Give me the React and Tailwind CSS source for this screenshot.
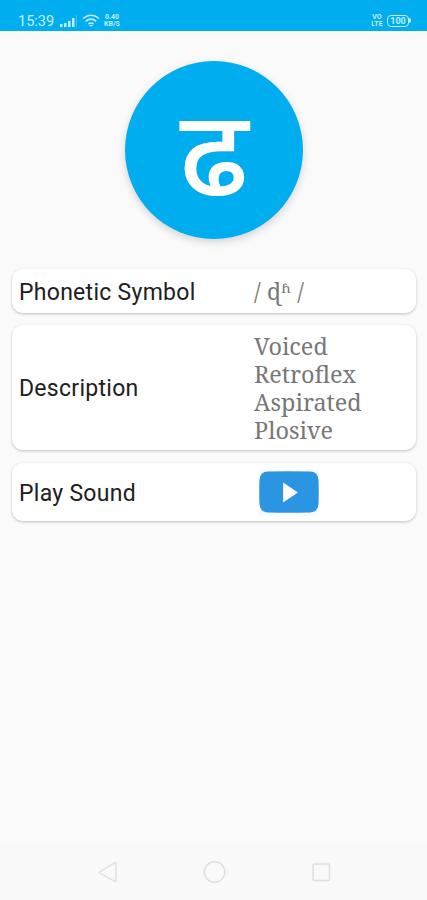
import React from "react";

const cardClass =
  "flex items-center rounded-[11px] bg-white pl-[7px] shadow-[0_1px_3px_rgba(0,0,0,0.24)]";
const labelClass = "w-[235px] shrink-0 pt-[3px] text-[23px] leading-7 text-[#202020] tracking-[0.28px]";
const serifClass =
  "font-['Noto_Serif','Droid_Serif','DejaVu_Serif',serif] text-[#777]";

function StatusBar() {
  return (
    <header className="flex h-[31px] shrink-0 bg-[#00adef] pl-[18px] pr-[16px] pt-[11px] text-[#c5edff]">
      <span className="w-[42px] text-[14.5px] leading-[21px]">15:39</span>
      <svg className="mt-[4px] h-[13px] w-[18px]" viewBox="0 0 18 13" fill="currentColor">
        <path d="M0 9h2.5v3H0zM4 8h2.5v4H4zM8 6h2.5v6H8zM12 3h2.5v9H12z" />
        <path d="M16 0h1v12h-1z" opacity=".35" />
      </svg>
      <svg className="ml-[4px] mt-[3px] h-[14px] w-[18px]" viewBox="0 0 18 14" fill="none" stroke="currentColor" strokeWidth="1.6">
        <path d="M1 4.5Q9-2 17 4.5M3.7 7.4Q9 3 14.3 7.4M6.4 10Q9 8 11.6 10" />
        <path d="M7.2 11h3.6L9 13z" fill="currentColor" stroke="none" />
      </svg>
      <span className="ml-[3px] mt-[3px] flex h-[12px] w-[18px] flex-col text-center text-[7px] font-bold leading-[6.5px]">
        <span>0.40</span><span>KB/S</span>
      </span>
      <span className="ml-auto mt-[3px] flex h-[12px] w-[14px] flex-col text-center text-[7px] font-bold leading-[6.5px]">
        <span>VO</span><span>LTE</span>
      </span>
      <span className="ml-[3px] mt-[4px] flex h-[12px] w-[22px] items-center justify-center rounded-[4px] border border-current text-[9px] font-bold leading-none">
        100
      </span>
      <span className="mt-[7px] h-[5px] w-[2px] rounded-r bg-current" />
    </header>
  );
}

export default function App() {
  return (
    <div className="flex h-[900px] w-[427px] flex-col overflow-hidden bg-[#fafafa] font-['Roboto',sans-serif]">
      <StatusBar />
      <main className="flex flex-1 flex-col pl-[12px] pr-[11px]">
        <div className="ml-[113px] mt-[30px] flex h-[178px] w-[178px] shrink-0 items-center justify-center rounded-full bg-[#00adef] shadow-[0_3px_9px_rgba(0,0,0,0.16)]">
          <span className="pt-[33px] font-['Noto_Sans_Devanagari','Noto_Sans',sans-serif] text-[120px] font-medium leading-none text-white">ढ</span>
        </div>
        <section className={`${cardClass} mt-[30px] h-[44px]`}>
          <h2 className={labelClass}>Phonetic Symbol</h2>
          <p className={`${serifClass} text-[23px] leading-7 tracking-[0.2px]`}>/ ɖʱ /</p>
        </section>
        <section className={`${cardClass} mt-[12px] h-[125px]`}>
          <h2 className={labelClass}>Description</h2>
          <p className={`${serifClass} flex flex-col items-start pt-[3px] text-[23.4px] leading-[27.8px]`}>
            <span>Voiced</span><span>Retroflex</span><span>Aspirated</span><span>Plosive</span>
          </p>
        </section>
        <section className={`${cardClass} mt-[13px] h-[58px]`}>
          <h2 className={labelClass}>Play Sound</h2>
          <button aria-label="Play sound" className="ml-[4px] flex h-[47px] w-[61px] items-center justify-center bg-[#fafafa]">
            <svg className="h-[42px] w-[60px]" viewBox="0 0 61 42" preserveAspectRatio="none">
              <path d="M9 .5Q30.500 0 52 .5Q60 .5 60.500 9Q61 21 60.500 33Q60 41 52 41.500Q30.500 42 9 41.500Q1 41 .5 33Q0 21 .5 9Q1 .5 9 .5Z" fill="#2a95e2" />
              <path d="M24.500 11.500L39.500 21.500L24.500 31.500Z" fill="white" />
            </svg>
          </button>
        </section>
      </main>
      <nav className="flex h-[56px] shrink-0 items-center justify-center bg-[#f9f9f9]">
        <svg className="h-[24px] w-[234px]" viewBox="0 0 234 24" fill="none" stroke="#dedede" strokeWidth="1.4" strokeLinejoin="round">
          <path d="M2.500 12L18 2.500Q19 2 19 3V21Q19 22 18 21.500L2.500 13Q1.500 12.500 2.500 12Z" />
          <circle cx="117.500" cy="12" r="10.300" />
          <rect x="216" y="4" width="16.500" height="16.500" rx="1" />
        </svg>
      </nav>
    </div>
  );
}
